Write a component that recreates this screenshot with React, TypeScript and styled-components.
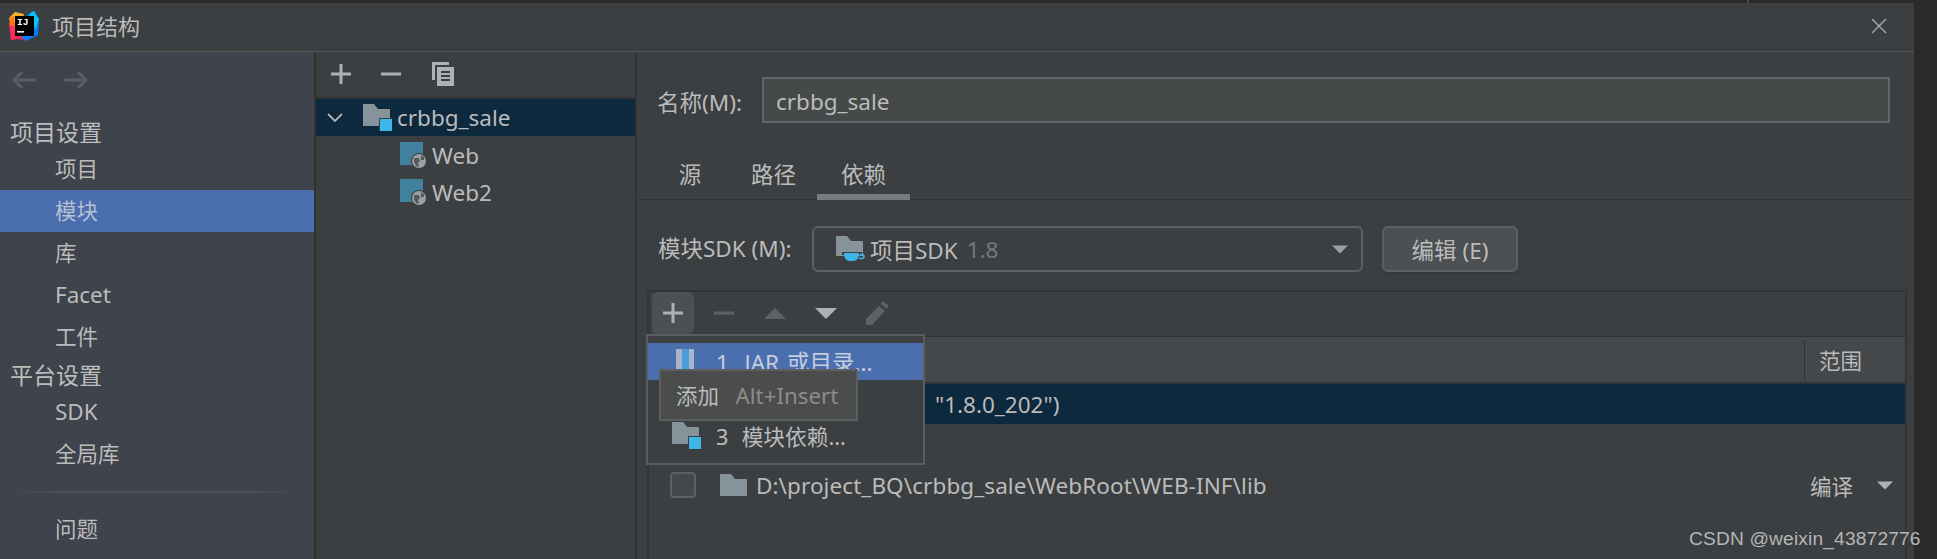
import React from "react";
import styled, { createGlobalStyle } from "styled-components";

const Global = createGlobalStyle`
  html, body { margin: 0; padding: 0; background: #2a2a2a; }
  body { width: 1937px; height: 559px; overflow: hidden; }
  * { box-sizing: border-box; }
`;

const FONT = `"Noto Sans", "Noto Sans CJK SC", sans-serif`;

const Screen = styled.div`
  position: relative;
  width: 1937px;
  height: 559px;
  padding-top: 3px;
  padding-right: 23px;
  background: #2a2a2a;
  font-family: ${FONT};
  font-size: 22.5px;
  color: #bbbbbb;
  overflow: hidden;
`;
const Dialog = styled.div`
  height: 556px;
  background: #3c3f41;
  display: flex;
  flex-direction: column;
`;
const TitleBar = styled.header`
  height: 49px;
  flex: none;
  border-bottom: 1px solid #555759;
  display: flex;
  align-items: center;
  padding: 0 27px 2px 9px;
  gap: 12px;
`;
const TitleText = styled.span`
  flex: 1;
  font-size: 22px;
  line-height: 30px;
`;
const Body = styled.div`
  flex: 1;
  display: flex;
  min-height: 0;
`;
const Sidebar = styled.nav`
  width: 314px;
  flex: none;
  background: #3e434c;
  display: flex;
  flex-direction: column;
`;
const NavArrows = styled.div`
  height: 63px;
  flex: none;
  display: flex;
  align-items: center;
  gap: 28px;
  padding: 0 0 8px 12px;
`;
const SectionLabel = styled.div`
  height: 33px;
  flex: none;
  padding-left: 10px;
  font-size: 23px;
  line-height: 35px;
  color: #bdbdbd;
  white-space: nowrap;
`;
const NavItem = styled.div<{ $active?: boolean; $latin?: boolean }>`
  height: 42px;
  flex: none;
  padding-left: 55px;
  font-size: ${(p) => (p.$latin ? 22.5 : 21.5)}px;
  line-height: 42px;
  white-space: nowrap;
  background: ${(p) => (p.$active ? "#4b6eaf" : "transparent")};
  color: ${(p) => (p.$active ? "#b6c0d2" : "#bbbbbb")};
`;
const NavRule = styled.div`
  height: 2px;
  margin: 16px 14px 15px 10px;
  background: linear-gradient(90deg, #3e434c, #4d4f53 15%, #4d4f53 85%, #3e434c);
`;
const Divider = styled.div`
  width: 2px;
  flex: none;
  background: #323232;
`;
const ModulePane = styled.section`
  width: 319px;
  flex: none;
  display: flex;
  flex-direction: column;
`;
const PaneToolbar = styled.div`
  height: 47px;
  flex: none;
  display: flex;
  align-items: center;
  padding: 0 0 2px 15px;
  gap: 30px;
  border-bottom: 2px solid #323232;
`;
const TreeRow = styled.div<{ $selected?: boolean; $indent: number }>`
  height: 37px;
  flex: none;
  display: flex;
  align-items: center;
  padding-left: ${(p) => p.$indent}px;
  padding-top: ${(p) => (p.$selected ? 0 : 2)}px;
  gap: 5px;
  background: ${(p) => (p.$selected ? "#0d293e" : "transparent")};
  white-space: nowrap;
`;
const Chevron = styled.svg`
  margin-right: 15px;
`;
const Detail = styled.section`
  flex: 1;
  min-width: 0;
  display: flex;
  flex-direction: column;
`;
const NameRow = styled.div`
  height: 73px;
  flex: none;
  padding: 25px 24px 0 20px;
  display: flex;
`;
const NameLabel = styled.label`
  width: 105px;
  flex: none;
  line-height: 51px;
  white-space: nowrap;
`;
const NameInput = styled.div`
  flex: 1;
  height: 46px;
  border: 2px solid #646464;
  background: #45494a;
  padding-left: 12px;
  line-height: 46px;
`;
const Tabs = styled.div`
  height: 75px;
  flex: none;
  display: flex;
  align-items: flex-end;
  padding-left: 13px;
  border-bottom: 1px solid #323232;
`;
const Tab = styled.div<{ $active?: boolean; $w: number }>`
  width: ${(p) => p.$w}px;
  height: 50px;
  text-align: center;
  line-height: 50px;
  border-bottom: 6px solid ${(p) => (p.$active ? "#787c7f" : "transparent")};
  margin-bottom: -1px;
`;
const SdkRow = styled.div`
  height: 90px;
  flex: none;
  padding: 26px 24px 0 21px;
  display: flex;
`;
const SdkLabel = styled.label`
  width: 154px;
  flex: none;
  line-height: 46px;
  white-space: nowrap;
`;
const Combo = styled.div`
  width: 551px;
  height: 46px;
  flex: none;
  border: 2px solid #5e6060;
  border-radius: 6px;
  padding: 0 13px 0 22px;
  display: flex;
  align-items: center;
  gap: 4px;
`;
const Muted = styled.span`
  color: #787878;
  margin-left: 5px;
  flex: 1;
`;
const EditButton = styled.button`
  width: 136px;
  height: 46px;
  flex: none;
  margin-left: 19px;
  border: 2px solid #5e6060;
  border-radius: 6px;
  background: #4c5052;
  color: #bbbbbb;
  font-family: ${FONT};
  font-size: 22.5px;
  padding: 0;
  box-shadow: 0 2px 2px #36383a;
`;
const TablePanel = styled.div`
  flex: 1;
  margin: 0 7px 0 10px;
  border: solid #333436;
  border-width: 2px 2px 0 2px;
  display: flex;
  flex-direction: column;
  min-height: 0;
`;
const TableToolbar = styled.div`
  height: 45px;
  flex: none;
  display: flex;
  align-items: flex-start;
  gap: 9px;
  padding-left: 3px;
  border-bottom: 1px solid #323232;
`;
const ToolSlot = styled.div<{ $hover?: boolean }>`
  width: 42px;
  height: 42px;
  flex: none;
  display: flex;
  align-items: center;
  justify-content: center;
  border-radius: 6px;
  background: ${(p) => (p.$hover ? "#4c5052" : "transparent")};
`;
const TableHead = styled.div`
  height: 47px;
  flex: none;
  display: flex;
  justify-content: flex-end;
  background: #45484a;
  border-bottom: 2px solid #333436;
  padding-top: 3px;
`;
const HeadCell = styled.div`
  width: 101px;
  height: 41px;
  border-left: 1px solid #323232;
  padding-left: 14px;
  font-size: 21.5px;
  line-height: 41px;
`;
const JdkRow = styled.div`
  height: 40px;
  flex: none;
  background: #0d293e;
  padding-left: 286px;
  line-height: 42px;
  white-space: nowrap;
`;
const LibRow = styled.div`
  height: 46px;
  margin-top: 38px;
  flex: none;
  display: flex;
  align-items: center;
  padding: 0 12px 0 21px;
  white-space: nowrap;
`;
const Check = styled.div`
  width: 26px;
  height: 26px;
  flex: none;
  border: 2px solid #5e6060;
  border-radius: 4px;
  background: #43494a;
  margin-right: 24px;
`;
const LibPath = styled.span`
  flex: 1;
  margin-left: 9px;
  letter-spacing: 0.08px;
`;
const ScopeCell = styled.span`
  margin-right: 24px;
  font-size: 21.5px;
`;
const PopupMenu = styled.div`
  position: absolute;
  left: 646px;
  top: 334px;
  width: 279px;
  height: 131px;
  border: 2px solid #5b5d5f;
  background: #3c3f41;
  padding-top: 7px;
`;
const MenuRow = styled.div<{ $selected?: boolean }>`
  height: 37px;
  display: flex;
  align-items: center;
  padding-left: 24px;
  background: ${(p) => (p.$selected ? "#4b6eaf" : "transparent")};
  color: ${(p) => (p.$selected ? "#c5cedd" : "#bbbbbb")};
  font-size: ${(p) => (p.$selected ? 22.5 : 21.7)}px;
  word-spacing: ${(p) => (p.$selected ? 2 : 1)}px;
  white-space: pre;
`;
const MenuIcon = styled.span<{ $inset?: number }>`
  width: 44px;
  flex: none;
  display: flex;
  padding-left: ${(p) => p.$inset ?? 0}px;
`;
const Tooltip = styled.div`
  position: absolute;
  left: 659px;
  top: 369px;
  width: 199px;
  height: 52px;
  border: 2px solid #5c5e60;
  background: #4b4c4c;
  padding-left: 15px;
  font-size: 21.5px;
  line-height: 49px;
  white-space: pre;
`;
const Shortcut = styled.span`
  color: #8c8c8c;
  font-size: 22.3px;
  margin-left: 11px;
`;
const Watermark = styled.div`
  position: absolute;
  left: 1689px;
  top: 525px;
  font-family: "Liberation Sans", Arial, sans-serif;
  font-size: 19.2px;
  line-height: 28px;
  letter-spacing: 0.15px;
  color: rgba(205, 205, 205, 0.85);
  white-space: nowrap;
`;
const TopNotch = styled.div`
  position: absolute;
  left: 1747px;
  top: 0;
  width: 2px;
  height: 3px;
  background: #4a4a4a;
`;

const Logo = () => (
  <svg width="31" height="31" viewBox="0 0 31 31">
    <polygon points="6,1 15,3 12,14 2,12 0,7" fill="#fcb22f" />
    <polygon points="0,12 10,12 7,28 2,29" fill="#fe315d" />
    <polygon points="0,8 5,5 6,15 1,14" fill="#f97a12" />
    <polygon points="2,29 3,20 18,24 16,29 8,28" fill="#fe2857" />
    <polygon points="18,4 25,0 30,8 29,24 17,30 12,26 22,14" fill="#087cfa" />
    <polygon points="21,2 25,0 30,8 27,18 20,10" fill="#07c3f2" />
    <rect x="6" y="5" width="19" height="20" fill="#000" />
    <text x="8" y="14" fontFamily="Liberation Mono, monospace" fontWeight="700" fontSize="9.5" fill="#fff">IJ</text>
    <rect x="8" y="20" width="7" height="1.6" fill="#fff" />
  </svg>
);
const Close = () => (
  <svg width="16" height="16" viewBox="0 0 16 16" stroke="#a9abad" strokeWidth="1.4" fill="none">
    <path d="M1 1 15 15M15 1 1 15" />
  </svg>
);
const Arrow = ({ back }: { back?: boolean }) => (
  <svg width="24" height="20" viewBox="0 0 24 20" fill="none" stroke="#5c5f62" strokeWidth="3">
    {back ? <path d="M24 10H2M10 2 2 10l8 8" /> : <path d="M0 10h22M14 2l8 8-8 8" />}
  </svg>
);
const Plus = ({ c = "#afb1b3" }: { c?: string }) => (
  <svg width="20" height="20" viewBox="0 0 20 20" fill={c}>
    <path d="M8.5 0h3v8.500H20v3h-8.500V20h-3v-8.500H0v-3h8.500z" />
  </svg>
);
const Minus = ({ c = "#afb1b3" }: { c?: string }) => (
  <svg width="20" height="20" viewBox="0 0 20 20" fill={c}>
    <rect x="0" y="8.500" width="20" height="3" />
  </svg>
);
const CopyIcon = () => (
  <svg width="24" height="26" viewBox="0 0 24 26">
    <path d="M1 1h17v3H4v15H1z" fill="#afb1b3" />
    <rect x="6" y="6" width="17" height="19" fill="#afb1b3" />
    <path d="M10 11h9M10 15h9M10 19h9" stroke="#3c3f41" strokeWidth="2" />
  </svg>
);
const Folder = () => (
  <svg width="27" height="22" viewBox="0 0 27 22" fill="#87939a">
    <path d="M0 0h11l4 5h12v17H0z" />
  </svg>
);
const ModuleFolder = () => (
  <svg width="29" height="27" viewBox="0 0 29 27">
    <path d="M0 0h11l4 5h12v17H0z" fill="#87939a" />
    <rect x="16" y="14" width="13" height="13" fill="#3c3f41" />
    <rect x="17" y="15" width="12" height="12" fill="#3db5e6" />
  </svg>
);
const WebIcon = () => (
  <svg width="27" height="27" viewBox="0 0 27 27">
    <rect x="0" y="0" width="23" height="23" fill="#40829d" />
    <circle cx="19" cy="19" r="8" fill="#3c3f41" />
    <circle cx="19" cy="19" r="7" fill="#9aa0a3" />
    <path d="M14 16h5l1 3-2 2 1 4-3-1-2-4zM21 13l3 2v3h-3z" fill="#55595c" />
  </svg>
);
const JdkFolder = () => (
  <svg width="30" height="26" viewBox="0 0 30 26">
    <path d="M0 0h11l4 5h12v15H0z" fill="#87939a" />
    <path d="M6 16h20v3H6z" fill="#3c3f41" />
    <path d="M8 17h15v2a6 6 0 0 1-6 6h-3a6 6 0 0 1-6-6z" fill="#3db5e6" />
    <path d="M24 18.500h2a2 2 0 0 1 0 4h-3" fill="none" stroke="#3db5e6" strokeWidth="1.600" />
  </svg>
);
const ZipIcon = () => (
  <svg width="18" height="26" viewBox="0 0 18 26">
    <rect width="18" height="26" fill="#a4b4cd" />
    <rect x="6" width="7" height="26" fill="#3aa3e0" />
    <path d="M6 2h7M6 6h7M6 10h7M6 14h7M6 18h7M6 22h7" stroke="#6c8dbd" strokeWidth="1" />
  </svg>
);
const Tri = ({ up, c, w = 22, h = 11 }: { up?: boolean; c: string; w?: number; h?: number }) => (
  <svg width={w} height={h} viewBox="0 0 22 11" fill={c}>
    {up ? <polygon points="11,0 22,11 0,11" /> : <polygon points="0,0 22,0 11,11" />}
  </svg>
);
const Pencil = () => (
  <svg width="25" height="26" viewBox="0 0 25 26" fill="#5f6265">
    <path d="M18 1l6 5-2.500 3-6-5zM14 6l6 5L7 25H1v-6z" />
  </svg>
);
const Tree = () => (
  <Chevron width="16" height="10" viewBox="0 0 16 10" fill="none" stroke="#afb1b3" strokeWidth="1.800">
    <path d="M1 1l7 7 7-7" />
  </Chevron>
);

export default function App() {
  return (
    <Screen>
      <Global />
      <TopNotch />
      <Dialog>
        <TitleBar>
          <Logo />
          <TitleText>项目结构</TitleText>
          <Close />
        </TitleBar>
        <Body>
          <Sidebar>
            <NavArrows>
              <Arrow back />
              <Arrow />
            </NavArrows>
            <SectionLabel>项目设置</SectionLabel>
            <NavItem>项目</NavItem>
            <NavItem $active>模块</NavItem>
            <NavItem>库</NavItem>
            <NavItem $latin>Facet</NavItem>
            <NavItem>工件</NavItem>
            <SectionLabel>平台设置</SectionLabel>
            <NavItem $latin>SDK</NavItem>
            <NavItem>全局库</NavItem>
            <NavRule />
            <NavItem>问题</NavItem>
          </Sidebar>
          <Divider />
          <ModulePane>
            <PaneToolbar>
              <Plus />
              <Minus />
              <CopyIcon />
            </PaneToolbar>
            <TreeRow $selected $indent={11}>
              <Tree />
              <ModuleFolder />
              <span>crbbg_sale</span>
            </TreeRow>
            <TreeRow $indent={84}>
              <WebIcon />
              <span>Web</span>
            </TreeRow>
            <TreeRow $indent={84}>
              <WebIcon />
              <span>Web2</span>
            </TreeRow>
          </ModulePane>
          <Divider />
          <Detail>
            <NameRow>
              <NameLabel>名称(M):</NameLabel>
              <NameInput>crbbg_sale</NameInput>
            </NameRow>
            <Tabs>
              <Tab $w={80}>源</Tab>
              <Tab $w={87}>路径</Tab>
              <Tab $active $w={93}>依赖</Tab>
            </Tabs>
            <SdkRow>
              <SdkLabel>模块SDK (M):</SdkLabel>
              <Combo>
                <JdkFolder />
                <span>项目SDK</span>
                <Muted>1.8</Muted>
                <Tri c="#9a9da0" w={16} h={9} />
              </Combo>
              <EditButton>编辑 (E)</EditButton>
            </SdkRow>
            <TablePanel>
              <TableToolbar>
                <ToolSlot $hover>
                  <Plus />
                </ToolSlot>
                <ToolSlot>
                  <Minus c="#5f6265" />
                </ToolSlot>
                <ToolSlot>
                  <Tri up c="#5f6265" />
                </ToolSlot>
                <ToolSlot>
                  <Tri c="#afb1b3" />
                </ToolSlot>
                <ToolSlot>
                  <Pencil />
                </ToolSlot>
              </TableToolbar>
              <TableHead>
                <HeadCell>范围</HeadCell>
              </TableHead>
              <JdkRow>"1.8.0_202")</JdkRow>
              <LibRow>
                <Check />
                <Folder />
                <LibPath>D:\project_BQ\crbbg_sale\WebRoot\WEB-INF\lib</LibPath>
                <ScopeCell>编译</ScopeCell>
                <Tri c="#afb1b3" w={16} h={9} />
              </LibRow>
            </TablePanel>
          </Detail>
        </Body>
      </Dialog>
      <PopupMenu>
        <MenuRow $selected>
          <MenuIcon $inset={4}><ZipIcon /></MenuIcon>
          <span>1  JAR 或目录...</span>
        </MenuRow>
        <MenuRow />
        <MenuRow>
          <MenuIcon><ModuleFolder /></MenuIcon>
          <span>3  模块依赖...</span>
        </MenuRow>
      </PopupMenu>
      <Tooltip>
        添加 <Shortcut>Alt+Insert</Shortcut>
      </Tooltip>
      <Watermark>CSDN @weixin_43872776</Watermark>
    </Screen>
  );
}
